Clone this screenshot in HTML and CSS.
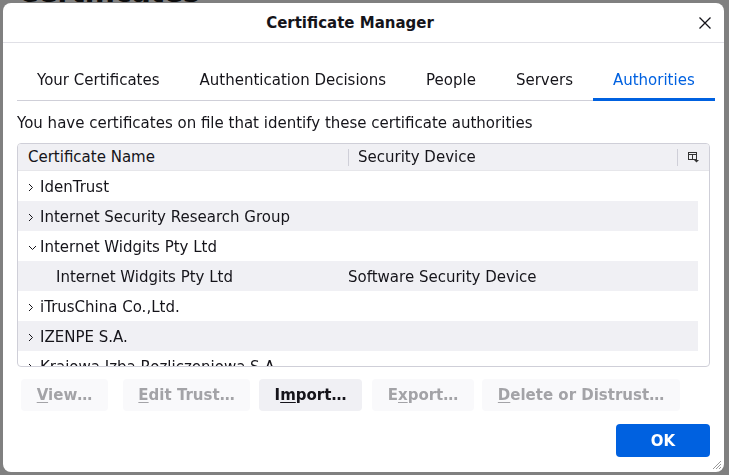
FILE: index.html
```html
<!DOCTYPE html>
<html>
<head>
<meta charset="utf-8">
<link rel="stylesheet" href="styles.css">
</head>
<body>
<div class="page">
  <h1 class="page-title">Certificates</h1>
</div>
<div class="dialog">
  <div class="dlg-header">
    <span class="dlg-title">Certificate Manager</span>
    <button class="close" aria-label="Close">
      <svg width="14" height="14" viewBox="0 0 14 14"><path d="M1.5 1.5 L12.5 12.5 M12.5 1.5 L1.5 12.5" stroke="#15141a" stroke-width="1.3" fill="none"/></svg>
    </button>
  </div>
  <div class="dlg-body">
    <div class="tabs">
      <div class="tab">Your Certificates</div>
      <div class="tab">Authentication Decisions</div>
      <div class="tab">People</div>
      <div class="tab">Servers</div>
      <div class="tab active">Authorities</div>
    </div>
    <p class="desc">You have certificates on file that identify these certificate authorities</p>
    <div class="tree">
      <div class="tree-head">
        <div class="col col-name">Certificate Name</div>
        <div class="col col-dev">Security Device</div>
        <div class="col-pick">
          <svg width="11" height="11" viewBox="0 0 11 11"><rect x="0.5" y="0.5" width="8" height="7" fill="none" stroke="#333" stroke-width="1"/><path d="M0.5 2.5 H8.5 M4.5 2.5 V7.5" stroke="#333" stroke-width="1"/><path d="M6 8 H11 L8.5 10.5 Z" fill="#333"/></svg>
        </div>
      </div>
      <div class="rows">
        <div class="row"><span class="tw"><svg width="6" height="9" viewBox="0 0 6 9"><path d="M1 1 L4.5 4.5 L1 8" stroke="#15141a" stroke-width="1" fill="none"/></svg></span><span class="cell-name">IdenTrust</span></div>
        <div class="row alt"><span class="tw"><svg width="6" height="9" viewBox="0 0 6 9"><path d="M1 1 L4.5 4.5 L1 8" stroke="#15141a" stroke-width="1" fill="none"/></svg></span><span class="cell-name">Internet Security Research Group</span></div>
        <div class="row"><span class="tw"><svg width="9" height="6" viewBox="0 0 9 6"><path d="M1 1 L4.5 4.5 L8 1" stroke="#15141a" stroke-width="1" fill="none"/></svg></span><span class="cell-name">Internet Widgits Pty Ltd</span></div>
        <div class="row alt child"><span class="cell-name">Internet Widgits Pty Ltd</span><span class="cell-dev">Software Security Device</span></div>
        <div class="row"><span class="tw"><svg width="6" height="9" viewBox="0 0 6 9"><path d="M1 1 L4.5 4.5 L1 8" stroke="#15141a" stroke-width="1" fill="none"/></svg></span><span class="cell-name">iTrusChina Co.,Ltd.</span></div>
        <div class="row alt"><span class="tw"><svg width="6" height="9" viewBox="0 0 6 9"><path d="M1 1 L4.5 4.5 L1 8" stroke="#15141a" stroke-width="1" fill="none"/></svg></span><span class="cell-name">IZENPE S.A.</span></div>
        <div class="row"><span class="tw"><svg width="6" height="9" viewBox="0 0 6 9"><path d="M1 1 L4.5 4.5 L1 8" stroke="#15141a" stroke-width="1" fill="none"/></svg></span><span class="cell-name">Krajowa Izba Rozliczeniowa S.A.</span></div>
      </div>
    </div>
    <div class="actions">
      <button class="btn dis b-view" disabled><u>V</u>iew…</button>
      <button class="btn dis b-edit" disabled><u>E</u>dit Trust…</button>
      <button class="btn b-import">I<u>m</u>port…</button>
      <button class="btn dis b-export" disabled>E<u>x</u>port…</button>
      <button class="btn dis b-delete" disabled><u>D</u>elete or Distrust…</button>
    </div>
    <div class="footer">
      <button class="btn-ok">OK</button>
    </div>
  </div>
  <svg class="grip" width="10" height="10" viewBox="0 0 10 10"><path d="M9 1 L1 9 M9 4 L4 9 M9 7 L7 9" stroke="#9a9a9a" stroke-width="1"/></svg>
</div>
</body>
</html>
```
FILE: styles.css
```css
* { box-sizing: border-box; }
html, body {
  margin: 0;
  padding: 0;
  height: 100%;
  background: #808080;
  overflow: hidden;
  font-family: "DejaVu Sans", sans-serif;
  color: #15141a;
}
.page { padding: 0 18px; }
.page-title {
  margin: -24px 0 0;
  font-size: 28px;
  font-weight: bold;
  color: #0c0c0d;
}
.dialog {
  position: fixed;
  top: 3px;
  left: 3px;
  width: 721px;
  height: 469px;
  background: #fff;
  border-radius: 8px;
  display: flex;
  flex-direction: column;
}
.dlg-header {
  height: 40px;
  border-bottom: 1px solid #e0e0e6;
  display: flex;
  align-items: center;
  padding-left: 4px;
}
.dlg-title {
  flex: 1;
  text-align: center;
  font-weight: bold;
  font-size: 15px;
  padding-top: 1px;
}
.close {
  width: 24px;
  height: 24px;
  margin-right: 7px;
  padding: 0;
  border: 0;
  background: none;
  display: flex;
  align-items: center;
  justify-content: center;
}
.dlg-body {
  padding: 15px 14px 0 14px;
  display: flex;
  flex-direction: column;
}
.tabs {
  display: flex;
  border-bottom: 1px solid #cfcfd8;
  margin-right: -1px;
}
.tab {
  flex: none;
  white-space: nowrap;
  padding: 0 20px;
  height: 43px;
  display: flex;
  align-items: center;
  font-size: 15px;
  border-bottom: 3px solid transparent;
  margin-bottom: -1px;
  padding-top: 3px;
}
.tab.active {
  color: #0061e0;
  border-bottom-color: #0061e0;
}
.desc {
  margin: 0;
  height: 42px;
  display: flex;
  align-items: center;
  font-size: 15px;
  padding-top: 2px;
}
.tree {
  border: 1px solid #cfcfd8;
  border-radius: 4px;
  height: 224px;
  overflow: hidden;
  display: flex;
  flex-direction: column;
}
.tree-head {
  height: 27px;
  flex: none;
  background: #f0f0f4;
  display: flex;
  align-items: center;
  font-size: 15px;
  border-bottom: 1px solid #e6e6ea;
}
.col { display: flex; align-items: center; height: 100%; }
.col-name { width: 330px; padding-left: 10px; }
.col-dev {
  width: 329px;
  padding-left: 10px;
  position: relative;
}
.col-dev::before {
  content: "";
  position: absolute;
  left: 0;
  top: 5px;
  height: 17px;
  border-left: 1px solid #cfcfd8;
}
.col-pick {
  flex: 1;
  height: 100%;
  display: flex;
  align-items: center;
  padding-left: 11px;
  position: relative;
}
.col-pick::before {
  content: "";
  position: absolute;
  left: 0;
  top: 5px;
  height: 17px;
  border-left: 1px solid #cfcfd8;
}
.rows { width: 680px; }
.row {
  height: 30px;
  display: flex;
  align-items: center;
  font-size: 15px;
  padding-left: 10px;
  padding-top: 1px;
}
.row.alt { background: #f0f0f4; }
.tw {
  width: 12px;
  display: flex;
  align-items: center;
  padding-top: 2px;
}
.cell-name { white-space: nowrap; }
.row.child .cell-name { width: 320px; padding-left: 28px; }
.actions {
  display: flex;
  margin-top: 12px;
  padding-left: 4px;
}
.btn {
  height: 32px;
  border: 0;
  border-radius: 4px;
  font-family: inherit;
  font-weight: bold;
  font-size: 15px;
  background: #f0f0f4;
  color: #15141a;
  padding: 0;
}
.btn.dis {
  background: #f9f9fb;
  color: #a3a3a7;
}
.btn u { text-underline-offset: 2px; }
.b-view { width: 87px; }
.b-edit { width: 127px; margin-left: 15px; }
.b-import { width: 103px; margin-left: 9px; }
.b-export { width: 102px; margin-left: 10px; }
.b-delete { width: 198px; margin-left: 8px; }
.footer {
  display: flex;
  justify-content: flex-end;
  margin-top: 13px;
}
.btn-ok {
  width: 94px;
  height: 33px;
  border: 0;
  border-radius: 4px;
  background: #0061e0;
  color: #fff;
  font-family: inherit;
  font-weight: bold;
  font-size: 15px;
}
.grip {
  position: absolute;
  right: 2px;
  bottom: 2px;
}
```
